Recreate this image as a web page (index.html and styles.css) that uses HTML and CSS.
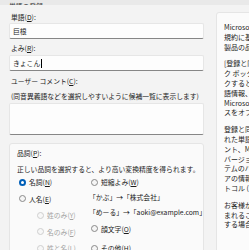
FILE: index.html
```html
<!DOCTYPE html>
<html lang="ja">
<head>
<meta charset="utf-8">
<title>単語の登録</title>
<link rel="stylesheet" href="styles.css">
</head>
<body>
<div class="window">
  <div class="titlebar"><span class="title">単語の登録</span></div>
  <div class="content">
    <div class="form">
      <div class="field-label first">単語(<u>D</u>):</div>
      <div class="textbox"><span>巨根</span></div>
      <div class="field-label">よみ(<u>R</u>):</div>
      <div class="textbox"><span>きょこん</span><span class="caret"></span></div>
      <div class="field-label comment">ユーザー コメント(<u>C</u>):</div>
      <div class="hint">(同音異義語などを選択しやすいように候補一覧に表示します)</div>
      <div class="textarea"></div>
      <div class="group">
        <div class="group-label">品詞(<u>P</u>):</div>
        <div class="group-desc">正しい品詞を選択すると、より高い変換精度を得られます。</div>
        <div class="pos-grid">
          <div class="col">
            <div class="radio checked"><span class="dot"></span><span>名詞(<u>N</u>)</span></div>
            <div class="radio"><span class="dot"></span><span>人名(<u>E</u>)</span></div>
            <div class="sub">
              <div class="radio disabled"><span class="dot"></span><span>姓のみ(<u>Y</u>)</span></div>
              <div class="radio disabled"><span class="dot"></span><span>名のみ(<u>F</u>)</span></div>
              <div class="radio disabled"><span class="dot"></span><span>姓と名(<u>L</u>)</span></div>
            </div>
          </div>
          <div class="col">
            <div class="radio"><span class="dot"></span><span>短縮よみ(<u>W</u>)</span></div>
            <div class="example">「かぶ」→「株式会社」</div>
            <div class="example">「めーる」→「aoki@example.com」</div>
            <div class="radio"><span class="dot"></span><span>顔文字(<u>O</u>)</span></div>
            <div class="radio last"><span class="dot"></span><span>その他(<u>H</u>)</span></div>
          </div>
        </div>
      </div>
    </div>
    <div class="info">
      <p><span>Microsoft サービス</span><span>規約に基づき、お客様が登録した単語は</span><span>製品の品質向上のために使用されます。</span></p>
      <p><span>[登録と同時に単語情報を送信する] チェッ</span><span>ク ボックスをオンにして [登録] をクリッ</span><span>クすると、登録した単</span><span>語情報、コメント、品詞が</span><span>Microsoft に送信されます。チェックボック</span><span>スをオフにすると送信されません。</span></p>
      <p><span>登録と同時に送信さ</span><span>れた単語情報には、コメ</span><span>ント、Microsoft IME の</span><span>バージョン、オペレーティング シス</span><span>テムのバージョン、ハードウェ</span><span>アの情報、インターネット プロ</span><span>トコル (IP) アドレスが含まれます。</span></p>
      <p><span>お客様が登録した単語に個人情報が含</span><span>まれることがあります。個人情報を含む単語を登録</span><span>する場合はチェックをオフにしてください。</span></p>
    </div>
  </div>
</div>
</body>
</html>
```

FILE: styles.css
```css
html, body {
  margin: 0;
  padding: 0;
}
body {
  width: 249px;
  height: 250px;
  overflow: hidden;
  background: #f3f3f3;
  font-family: "Noto Sans CJK JP", "Noto Sans", sans-serif;
  font-size: 6.8px;
  color: #1b1b1b;
}
u {
  text-decoration-thickness: 0.5px;
  text-underline-offset: 1px;
}
.window {
  width: 340px;
}
.titlebar {
  height: 5px;
  background: #e9e9e9;
  overflow: hidden;
  display: flex;
  align-items: flex-end;
  padding-left: 9px;
}
.title {
  line-height: 10px;
  margin-bottom: -6px;
  color: #333;
  white-space: nowrap;
}
.content {
  display: flex;
  align-items: flex-start;
  padding: 7px 0 0 9px;
  gap: 12px;
}
.form {
  width: 195px;
  flex: none;
  white-space: nowrap;
}
.field-label {
  line-height: 10px;
  padding-left: 2px;
  margin-top: 4px;
  margin-bottom: 2px;
}
.field-label.first {
  margin-top: 0;
  margin-bottom: 1px;
}
.field-label.comment {
  margin-top: 5px;
  margin-bottom: 0;
}
.textbox {
  height: 16px;
  box-sizing: border-box;
  background: #fdfdfd;
  border: 1px solid #e6e6e6;
  border-bottom: 1px solid #868686;
  border-radius: 2px;
  display: flex;
  align-items: center;
  padding-left: 3px;
  line-height: 10px;
}
.caret {
  width: 0.6px;
  height: 9px;
  background: #000;
  margin-left: 0.5px;
}
.hint {
  line-height: 10px;
  padding-left: 2px;
  margin-top: 5px;
  margin-bottom: 2px;
}
.textarea {
  height: 32px;
  box-sizing: border-box;
  background: #fdfdfd;
  border: 1px solid #e6e6e6;
  border-bottom: 1px solid #868686;
  border-radius: 2px;
}
.group {
  margin-top: 8px;
  background: #fafafa;
  border: 1px solid #e5e5e5;
  border-radius: 3px;
  padding: 4px 7px 10px;
  height: 120px;
}
.group-label {
  line-height: 10px;
}
.group-desc {
  line-height: 10px;
  margin-top: 6px;
}
.pos-grid {
  display: grid;
  grid-template-columns: 72px 1fr;
  padding-left: 2px;
}
.col {
  display: flex;
  flex-direction: column;
}
.radio {
  display: flex;
  align-items: center;
  gap: 3px;
  height: 16.5px;
  line-height: 10px;
}
.radio.last {
  margin-top: 3px;
}
.dot {
  width: 7px;
  height: 7px;
  box-sizing: border-box;
  border-radius: 50%;
  border: 1px solid #8a8a8a;
  background: #f5f5f5;
  flex: none;
}
.radio.checked .dot {
  border: 2px solid #005fb8;
  background: #fff;
}
.radio.disabled {
  color: #a3a3a3;
}
.radio.disabled .dot {
  border-color: #cfcfcf;
  background: #f7f7f7;
}
.sub {
  padding-left: 18px;
}
.example {
  line-height: 10px;
  margin-left: -2px;
  margin-top: 1px;
  margin-bottom: 4px;
}
.info {
  flex: none;
  width: 120px;
  background: #fbfbfb;
  border: 1px solid #e5e5e5;
  border-radius: 3px;
  padding: 10px 7px;
  height: 260px;
  font-size: 7px;
}
.info p {
  margin: 0 0 7px;
  line-height: 9.8px;
}
.info p span {
  display: block;
  white-space: nowrap;
}
```
